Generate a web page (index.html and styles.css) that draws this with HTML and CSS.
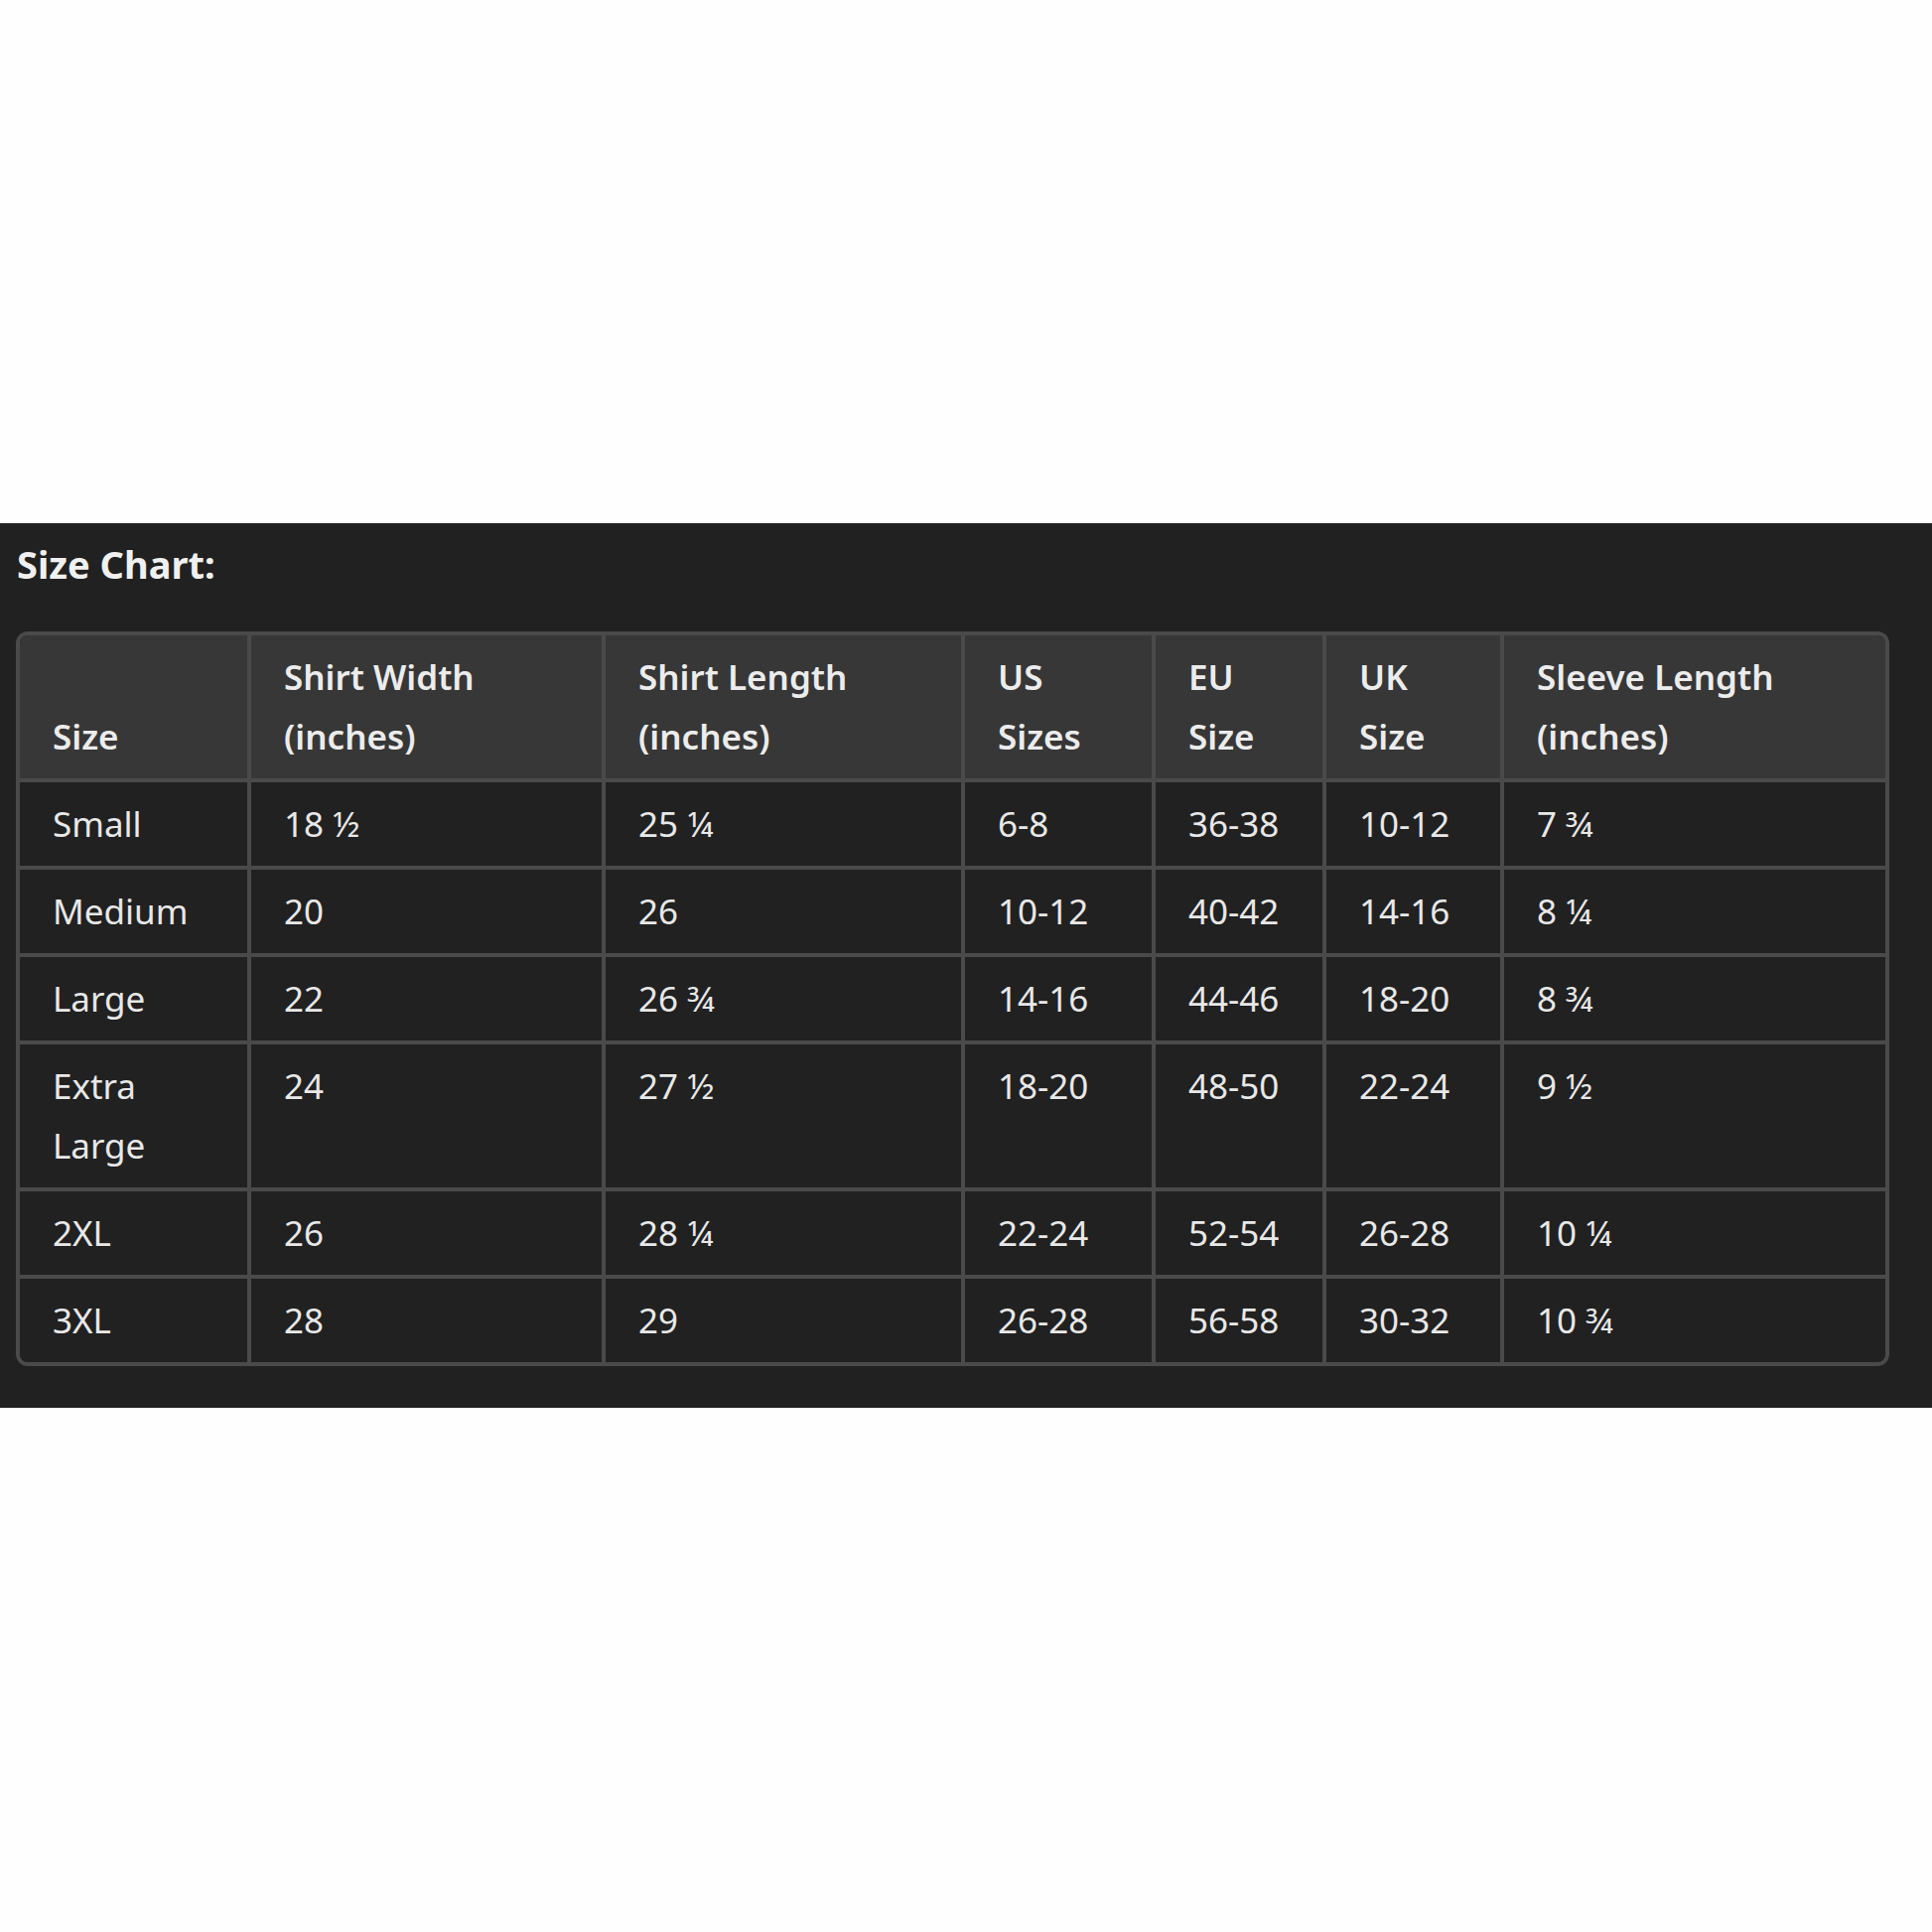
FILE: index.html
```html
<!DOCTYPE html>
<html lang="en">
<head>
<meta charset="utf-8">
<title>Size Chart</title>
<link rel="stylesheet" href="styles.css">
</head>
<body>
<section class="band">
  <h2 class="title">Size Chart:</h2>
  <div class="table-wrap">
    <table class="chart">
      <colgroup>
        <col class="c1"><col class="c2"><col class="c3"><col class="c4"><col class="c5"><col class="c6"><col class="c7">
      </colgroup>
      <thead>
        <tr>
          <th>Size</th>
          <th>Shirt Width<br>(inches)</th>
          <th>Shirt Length<br>(inches)</th>
          <th>US<br>Sizes</th>
          <th>EU<br>Size</th>
          <th>UK<br>Size</th>
          <th>Sleeve Length<br>(inches)</th>
        </tr>
      </thead>
      <tbody>
        <tr><td>Small</td><td>18 ½</td><td>25 ¼</td><td>6-8</td><td>36-38</td><td>10-12</td><td>7 ¾</td></tr>
        <tr><td>Medium</td><td>20</td><td>26</td><td>10-12</td><td>40-42</td><td>14-16</td><td>8 ¼</td></tr>
        <tr><td>Large</td><td>22</td><td>26 ¾</td><td>14-16</td><td>44-46</td><td>18-20</td><td>8 ¾</td></tr>
        <tr><td>Extra<br>Large</td><td>24</td><td>27 ½</td><td>18-20</td><td>48-50</td><td>22-24</td><td>9 ½</td></tr>
        <tr><td>2XL</td><td>26</td><td>28 ¼</td><td>22-24</td><td>52-54</td><td>26-28</td><td>10 ¼</td></tr>
        <tr><td>3XL</td><td>28</td><td>29</td><td>26-28</td><td>56-58</td><td>30-32</td><td>10 ¾</td></tr>
      </tbody>
    </table>
  </div>
</section>
</body>
</html>
```
FILE: styles.css
```css
html, body {
  margin: 0;
  padding: 0;
  background: #fefefe;
}

body {
  font-family: "Noto Sans", "Open Sans", sans-serif;
  color: #ececec;
}

.band {
  margin-top: 527px;
  background: #212121;
  padding: 15px 0 42px 0;
}

.title {
  margin: 0 0 42px 17px;
  font-size: 38px;
  line-height: 52px;
  font-weight: 700;
  color: #f0f0f0;
}

.table-wrap {
  margin-left: 16px;
  width: 1887px;
  box-sizing: border-box;
  border: 4px solid #4a4a4a;
  border-radius: 12px;
  overflow: hidden;
}

.chart {
  width: 100%;
  table-layout: fixed;
  border-collapse: collapse;
  font-size: 35px;
  line-height: 60px;
}

.c1 { width: 231px; }
.c2 { width: 357px; }
.c3 { width: 362px; }
.c4 { width: 192px; }
.c5 { width: 172px; }
.c6 { width: 179px; }
.c7 { width: 386px; }

.chart th,
.chart td {
  padding: 12px 20px 12px 33px;
  text-align: left;
  vertical-align: top;
  border-right: 4px solid #4a4a4a;
  border-bottom: 4px solid #4a4a4a;
}

.chart th:last-child,
.chart td:last-child {
  border-right: none;
}

.chart tbody tr:last-child td {
  border-bottom: none;
}

.chart th {
  background: #373737;
  font-weight: 600;
  vertical-align: bottom;
  color: #ececec;
}

.chart td {
  background: #212121;
  font-weight: 400;
  color: #e8e8e8;
}
```
